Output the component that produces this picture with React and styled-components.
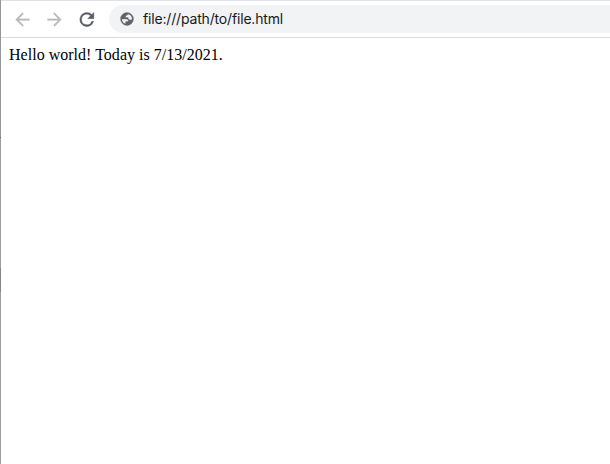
import React from "react";
import styled, { createGlobalStyle } from "styled-components";

const GlobalStyle = createGlobalStyle`
  * { box-sizing: border-box; }
  body { margin: 0; background: #fff; overflow: hidden; }
`;

const Window = styled.div`
  display: grid;
  grid-template-columns: 1px 1fr;
  width: 610px;
  height: 464px;
`;

const WindowEdge = styled.div`
  background: linear-gradient(
    #97979a 0 137px,
    #6c6c6c 137px 138px,
    #9c9c9c 138px 268px,
    #858585 268px 292px,
    #9c9c9c 292px
  );
`;

const Content = styled.div`
  display: flex;
  flex-direction: column;
  min-width: 0;
`;

const Toolbar = styled.header`
  display: flex;
  align-items: center;
  height: 38px;
  padding-left: 11px;
  border-top: 1px solid #dee1eb;
  border-bottom: 1px solid #dadce0;
  background: #fff;
`;

const NavButton = styled.button`
  display: flex;
  width: 21px;
  height: 21px;
  margin-right: 11px;
  padding: 0;
  border: 0;
  background: none;
  color: ${({ $muted }) => ($muted ? "#bababc" : "#5a5e63")};
`;

const Icon = styled.svg`
  display: block;
  flex: none;
  width: ${({ $size }) => $size}px;
  height: ${({ $size }) => $size}px;
  fill: currentColor;
  fill-rule: evenodd;
  stroke: currentColor;
  stroke-width: ${({ $weight }) => $weight};
`;

const AddressBar = styled.div`
  display: flex;
  flex: 1;
  align-items: center;
  gap: 8px;
  height: 28px;
  margin-left: 1px;
  padding-left: 10px;
  border-radius: 14px 0 0 14px;
  background: #f1f3f4;
  color: #5f6368;
`;

const Address = styled.span`
  color: #18191c;
  font: 14px/20px Inter, sans-serif;
  letter-spacing: -0.17px;
  white-space: nowrap;
`;

const Page = styled.main`
  flex: 1;
  padding: 8px;
  color: #000;
  font: 16px/18px "Liberation Serif", serif;
  letter-spacing: 0.02px;
`;

const icons = {
  back: { box: 24, weight: 0.2, d: "M20 11H7.83l5.59-5.59L12 4l-8 8 8 8 1.41-1.41L7.83 13H20z" },
  forward: { box: 24, weight: 0.2, d: "M12 4l-1.41 1.41L16.17 11H4v2h12.17l-5.58 5.59L12 20l8-8z" },
  reload: {
    box: 24,
    weight: 0.5,
    d: "M18.05 6.35A7.96 7.96 0 0 0 12.4 4a8 8 0 1 0 7.73 10h-2.08A6 6 0 1 1 12.4 6c1.66 0 3.14.69 4.22 1.78L13.4 11h7V4z",
  },
  globe: {
    box: 16,
    weight: 0.3,
    d: "M8 1.5a6.5 6.5 0 1 0 0 13A6.5 6.5 0 0 0 8 1.5zM2.8 8H7c1.6 0 2.5.9 2.4 2.6H6.6v2.4C4.3 12.4 2.8 10.4 2.8 8zM13.2 8c-.4.6-.9.9-1.7.9-1.6 0-2.4-.8-2.4-2.3H6.6c-.3-1.8.5-2.5 2-2.6V2.9c2.6.2 4.6 2.4 4.6 5.1z",
  },
};

function Glyph({ name, size = 21 }) {
  const { box, weight, d } = icons[name];
  return (
    <Icon $size={size} $weight={weight} viewBox={`0 0 ${box} ${box}`} aria-hidden="true">
      <path d={d} />
    </Icon>
  );
}

export default function App() {
  return (
    <Window>
      <GlobalStyle />
      <WindowEdge />
      <Content>
        <Toolbar>
          <NavButton $muted aria-label="Back"><Glyph name="back" /></NavButton>
          <NavButton $muted aria-label="Forward"><Glyph name="forward" /></NavButton>
          <NavButton aria-label="Reload"><Glyph name="reload" /></NavButton>
          <AddressBar>
            <Glyph name="globe" size={16} />
            <Address>file:///path/to/file.html</Address>
          </AddressBar>
        </Toolbar>
        <Page>Hello world! Today is 7/13/2021.</Page>
      </Content>
    </Window>
  );
}
